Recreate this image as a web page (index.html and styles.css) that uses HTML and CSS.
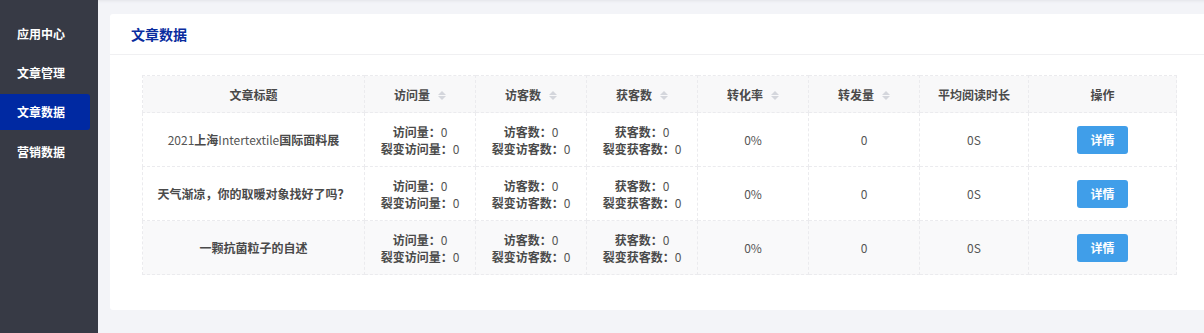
FILE: index.html
```html
<!DOCTYPE html>
<html lang="zh-CN">
<head>
  <meta charset="UTF-8">
  <title>文章数据</title>
  <link rel="stylesheet" href="styles.css">
</head>
<body>
  <div class="layout">
    <aside class="sidebar">
      <div class="menu-item">应用中心</div>
      <div class="menu-item">文章管理</div>
      <div class="menu-item active">文章数据</div>
      <div class="menu-item">营销数据</div>
    </aside>

    <main class="main">
      <div class="card">
        <div class="card-header">文章数据</div>
        <div class="card-body">
          <table class="data-table">
            <colgroup>
              <col style="width:222px"><col style="width:111px"><col style="width:111px"><col style="width:111px">
              <col style="width:111px"><col style="width:111px"><col style="width:109px"><col style="width:148px">
            </colgroup>
            <thead>
              <tr>
                <th>文章标题</th>
                <th>访问量<span class="sort"><i class="up"></i><i class="down"></i></span></th>
                <th>访客数<span class="sort"><i class="up"></i><i class="down"></i></span></th>
                <th>获客数<span class="sort"><i class="up"></i><i class="down"></i></span></th>
                <th>转化率<span class="sort"><i class="up"></i><i class="down"></i></span></th>
                <th>转发量<span class="sort"><i class="up"></i><i class="down"></i></span></th>
                <th>平均阅读时长</th>
                <th>操作</th>
              </tr>
            </thead>
            <tbody>
              <tr>
                <td class="title"><span class="latin">2021</span>上海<span class="latin">Intertextile</span>国际面料展</td>
                <td><div><b>访问量：</b>0</div><div><b>裂变访问量：</b>0</div></td>
                <td><div><b>访客数：</b>0</div><div><b>裂变访客数：</b>0</div></td>
                <td><div><b>获客数：</b>0</div><div><b>裂变获客数：</b>0</div></td>
                <td>0%</td>
                <td>0</td>
                <td>0S</td>
                <td><button class="btn-detail">详情</button></td>
              </tr>
              <tr>
                <td class="title">天气渐凉，你的取暖对象找好了吗？</td>
                <td><div><b>访问量：</b>0</div><div><b>裂变访问量：</b>0</div></td>
                <td><div><b>访客数：</b>0</div><div><b>裂变访客数：</b>0</div></td>
                <td><div><b>获客数：</b>0</div><div><b>裂变获客数：</b>0</div></td>
                <td>0%</td>
                <td>0</td>
                <td>0S</td>
                <td><button class="btn-detail">详情</button></td>
              </tr>
              <tr class="hover">
                <td class="title">一颗抗菌粒子的自述</td>
                <td><div><b>访问量：</b>0</div><div><b>裂变访问量：</b>0</div></td>
                <td><div><b>访客数：</b>0</div><div><b>裂变访客数：</b>0</div></td>
                <td><div><b>获客数：</b>0</div><div><b>裂变获客数：</b>0</div></td>
                <td>0%</td>
                <td>0</td>
                <td>0S</td>
                <td><button class="btn-detail">详情</button></td>
              </tr>
            </tbody>
          </table>
        </div>
      </div>
    </main>
  </div>
</body>
</html>
```

FILE: styles.css
```css
body {
  margin: 0;
  font-family: "Noto Sans CJK SC", "Noto Sans", sans-serif;
  font-size: 12px;
  color: #555;
}
.layout {
  display: flex;
  height: 333px;
  overflow: hidden;
}
.sidebar {
  width: 98px;
  flex-shrink: 0;
  background: #373a45;
  padding-top: 14px;
  box-sizing: border-box;
}
.menu-item {
  width: 90px;
  height: 39px;
  line-height: 39px;
  padding-left: 17px;
  box-sizing: border-box;
  color: #fff;
  font-weight: bold;
  font-size: 12px;
  border-radius: 0 3px 3px 0;
}
.menu-item.active {
  background: #0029a2;
  height: 36px;
  line-height: 36px;
  margin: 2px 0 2px;
}
.main {
  flex: 1;
  background: #f3f4f8;
  padding: 14px 0 0 12px;
  box-shadow: inset 0 3px 3px -2px #e2e3e8;
}
.card {
  background: #fff;
  border-radius: 3px 0 0 3px;
  height: 296px;
}
.card-header {
  height: 40px;
  line-height: 40px;
  padding-left: 21px;
  font-size: 14px;
  font-weight: bold;
  color: #0a2c9e;
  border-bottom: 1px solid #f0f0f2;
}
.card-body {
  padding: 20px 28px 0 32px;
}
.data-table {
  width: 1034px;
  border-collapse: collapse;
  table-layout: fixed;
  border: 1px dashed #e9e9ec;
}
.data-table th,
.data-table td {
  border: 1px dashed #ebebee;
  text-align: center;
  vertical-align: middle;
  padding: 0;
}
.data-table th {
  height: 36px;
  background: #f8f8f9;
  font-weight: bold;
  color: #4a4a4a;
}
.data-table td {
  height: 53px;
  line-height: 17px;
  color: #555;
}
.data-table td b {
  font-weight: bold;
  color: #4a4a4a;
}
.data-table td.title {
  font-weight: bold;
  color: #4a4a4a;
}
.data-table td.title .latin {
  font-weight: normal;
  color: #555;
}
.data-table tr.hover td {
  background: #f9f9fa;
}
.sort {
  display: inline-flex;
  flex-direction: column;
  gap: 1px;
  vertical-align: middle;
  margin-left: 8px;
  margin-top: -2px;
}
.sort i {
  width: 0;
  height: 0;
  border-left: 4px solid transparent;
  border-right: 4px solid transparent;
}
.sort .up {
  border-bottom: 4px solid #d4d6dc;
}
.sort .down {
  border-top: 4px solid #d4d6dc;
}
.btn-detail {
  width: 51px;
  height: 28px;
  border: none;
  border-radius: 3px;
  background: #409ee9;
  color: #fff;
  font-family: inherit;
  font-size: 12px;
  font-weight: bold;
  cursor: pointer;
}
```
